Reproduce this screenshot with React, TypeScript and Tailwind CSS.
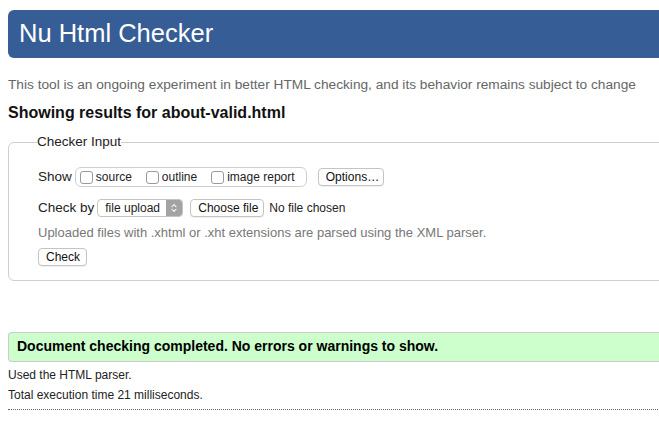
import { ChevronsUpDown } from "lucide-react";

const font = "font-['Liberation_Sans',Arial,sans-serif]";

function Checkbox({ label }: { label: string }) {
  return (
    <label className="flex items-center gap-[3px]">
      <span className="inline-block w-[13px] h-[13px] rounded-[3px] border border-[#9a9a9a] bg-white" />
      <span>{label}</span>
    </label>
  );
}

function Button({ children, className = "" }: { children: React.ReactNode; className?: string }) {
  return (
    <span
      className={`inline-flex items-center whitespace-nowrap h-[18px] px-[7px] rounded-[4px] border border-[#c4c4c4] bg-white text-[12px] text-[#111] shadow-[0_1px_0_rgba(0,0,0,0.06)] ${className}`}
    >
      {children}
    </span>
  );
}

export default function App() {
  return (
    <div className={`w-[659px] h-[422px] overflow-hidden bg-white ${font}`}>
      <div className="w-[720px] pl-2 pt-[10px]">
        {/* Header */}
        <div className="h-[48px] bg-[#365d95] rounded-l-[6px] flex items-center pl-[11px]">
          <h1 className="text-[25.5px] text-white leading-none">Nu Html Checker</h1>
        </div>

        <p className="mt-[19px] text-[13.7px] text-[#666] leading-[16px]">
          This tool is an ongoing experiment in better HTML checking, and its behavior remains subject to change
        </p>
        <h2 className="mt-[11px] text-[16px] font-bold text-[#111] leading-[18px]">
          Showing results for about-valid.html
        </h2>

        {/* Checker input */}
        <fieldset className="mt-[10px] border border-[#cfcfcf] rounded-[6px] px-[29px] pb-[14px] pt-[15px]">
          <legend className="text-[13.5px] text-[#222] -ml-[1px]">Checker Input</legend>

          <div className="flex items-center text-[13.5px] text-[#222]">
            <span className="mr-[3px]">Show</span>
            <div className="flex items-center h-[20px] rounded-[6px] border border-[#cfcfcf] px-[4px] gap-[14px] text-[12px] w-[232px]">
              <Checkbox label="source" />
              <Checkbox label="outline" />
              <Checkbox label="image report" />
            </div>
            <Button className="ml-[11px] w-[66px]">Options…</Button>
          </div>

          <div className="flex items-center mt-[10px] text-[13.5px] text-[#222]">
            <span className="mr-[3px]">Check by</span>
            <span className="inline-flex items-center h-[18px] w-[86px] rounded-[4px] border border-[#c4c4c4] bg-white text-[12px] overflow-hidden">
              <span className="flex-1 pl-[7px]">file upload</span>
              <span className="w-[16px] h-full bg-[#a3a3a3] flex items-center justify-center text-white">
                <ChevronsUpDown size={10} strokeWidth={2.5} />
              </span>
            </span>
            <Button className="ml-[7px] w-[74px]">Choose file</Button>
            <span className="ml-[5px] text-[12px]">No file chosen</span>
          </div>

          <p className="mt-[7px] text-[13px] text-[#777] leading-[15px]">
            Uploaded files with .xhtml or .xht extensions are parsed using the XML parser.
          </p>

          <div className="mt-[8px] flex">
            <Button className="w-[49px]">Check</Button>
          </div>
        </fieldset>

        {/* Result */}
        <div className="mt-[51px] h-[30px] bg-[#ccffcc] border-y border-l border-[#cccccc] rounded-l-[4px] flex items-center pl-[8px]">
          <span className="text-[14px] font-bold text-black">
            Document checking completed. No errors or warnings to show.
          </span>
        </div>

        <p className="mt-[6px] text-[12px] text-[#222] leading-[15px]">Used the HTML parser.</p>
        <p className="mt-[5px] text-[12px] text-[#222] leading-[15px]">Total execution time 21 milliseconds.</p>
        <div className="mt-[6px] border-t border-dotted border-[#666]" />
      </div>
    </div>
  );
}
